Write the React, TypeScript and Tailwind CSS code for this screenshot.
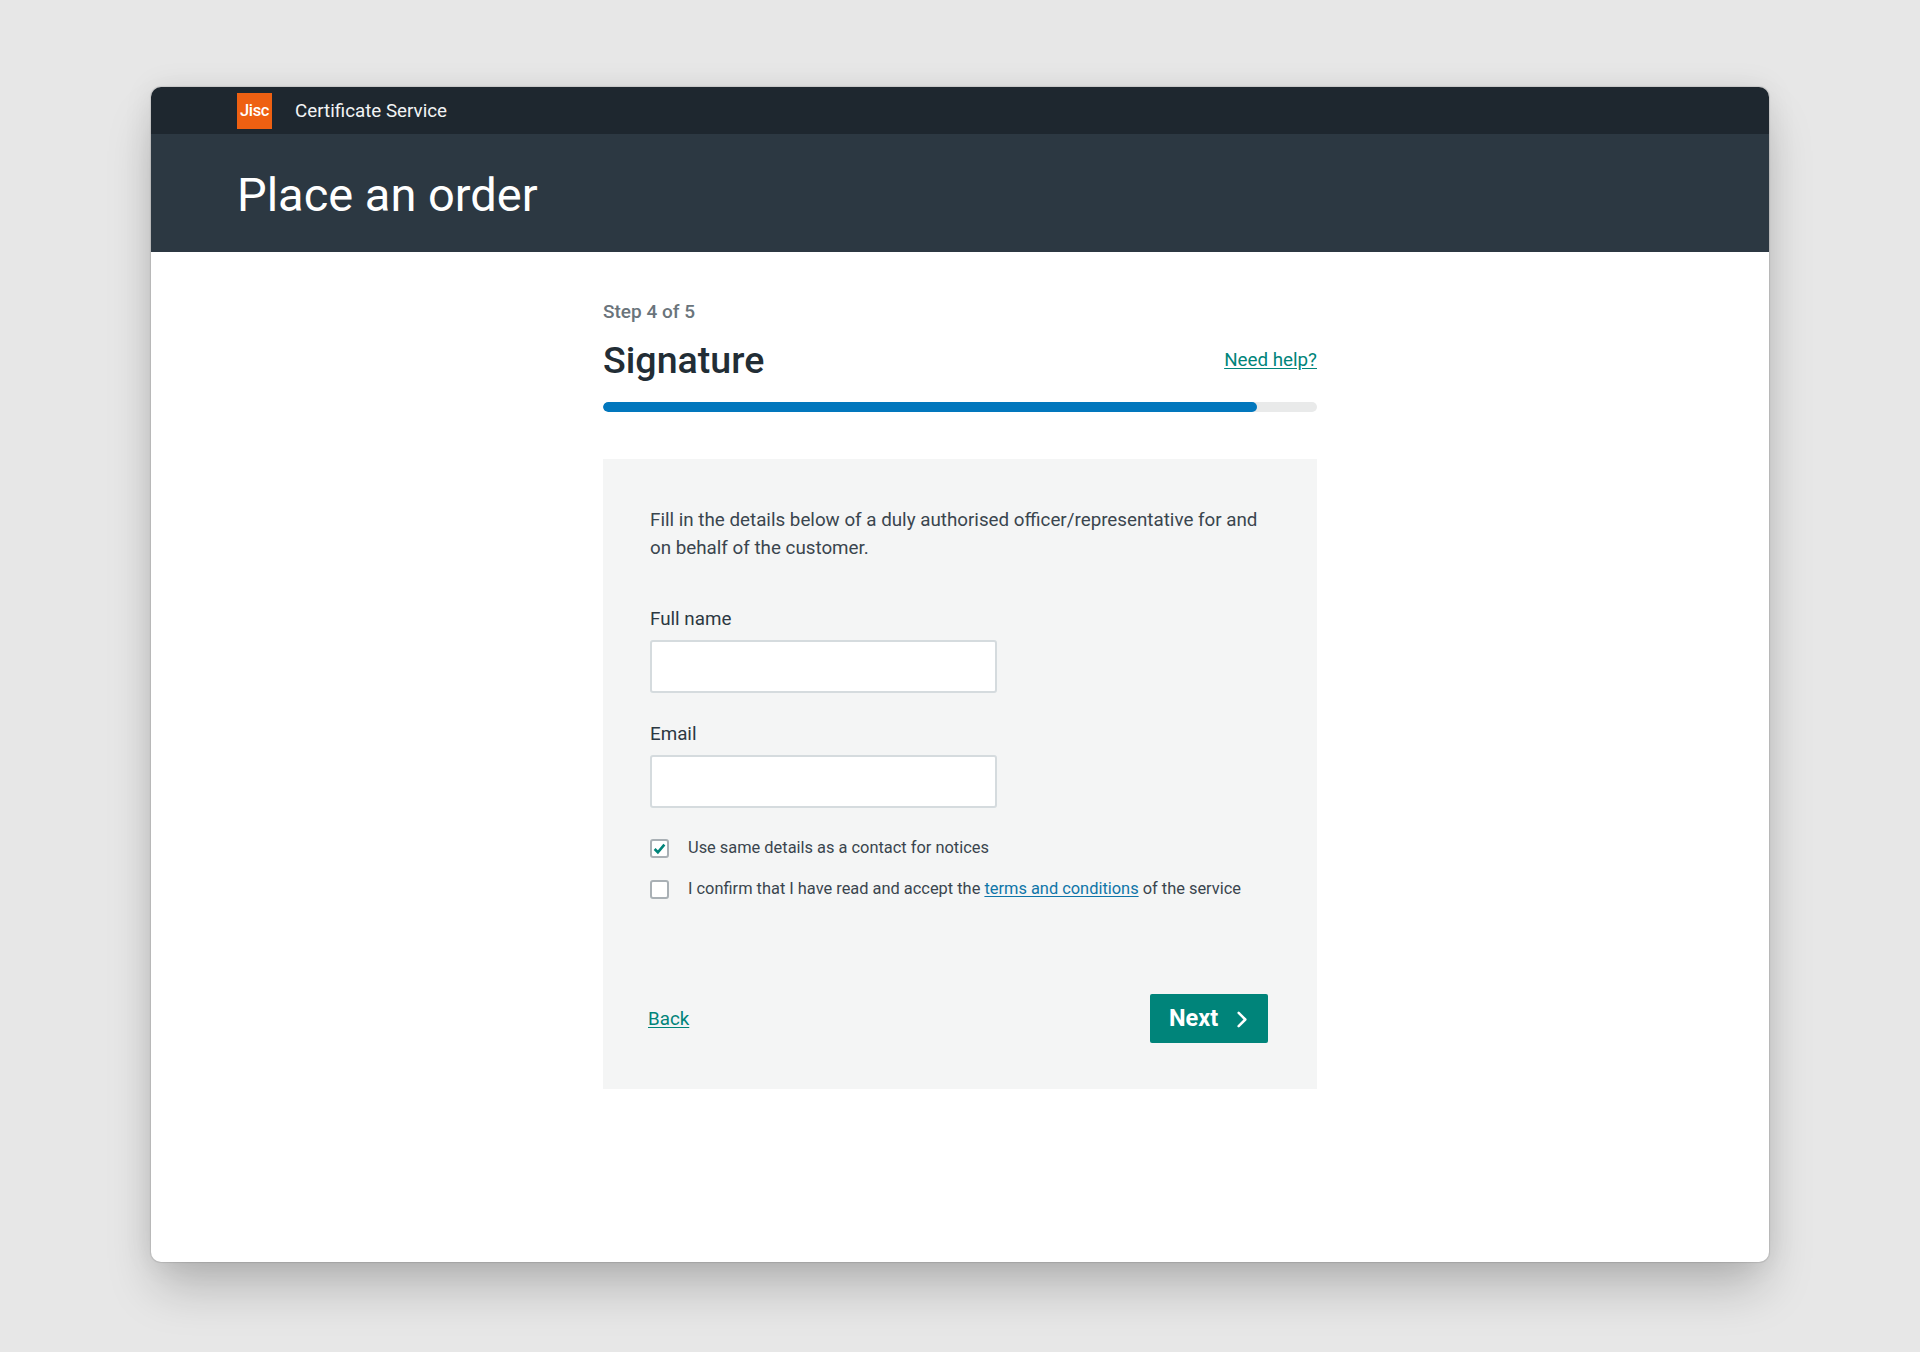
export default function App() {
  return (
    <div className="h-[1352px] w-full overflow-hidden bg-[#e7e7e7] pt-[87px] font-['Roboto',sans-serif]">
      <div className="mx-auto flex h-[1175px] w-[1618px] flex-col overflow-hidden rounded-[10px] bg-white shadow-[0_30px_50px_-6px_rgba(0,0,0,0.22),0_0_30px_rgba(0,0,0,0.08),0_0_1px_1px_rgba(0,0,0,0.1)]">
        <div className="flex h-[47px] items-center bg-[#1e272f] pl-[86px]">
          <div className="flex h-[36px] w-[35px] items-center justify-center bg-[#ee6012] pt-[1px] text-[16.5px] font-medium tracking-tight text-white">Jisc</div>
          <div className="ml-[23px] pt-[1px] text-[18.8px] text-[#f2f4f5]">Certificate Service</div>
        </div>
        <div className="flex h-[118px] items-center bg-[#2c3842] pl-[86px] pt-[3px]">
          <h1 className="text-[47px] leading-none text-white">Place an order</h1>
        </div>
        <main className="mx-auto flex w-[714px] flex-col pt-[48px]">
          <div className="text-[19px] leading-[24px] font-medium text-[#6a747b]">Step 4 of 5</div>
          <div className="mt-[13px] flex h-[48px] items-center justify-between">
            <h2 className="text-[37.6px] leading-none font-medium text-[#222d35]">Signature</h2>
            <a className="mb-[2px] text-[18.8px] text-[#00847a] underline underline-offset-2">Need help?</a>
          </div>
          <div className="mt-[17px] h-[10px] overflow-hidden rounded-full bg-[#e9eaea]">
            <div className="h-full w-[654px] rounded-full bg-[#0277bd]" />
          </div>
          <section className="mt-[47px] h-[630px] bg-[#f4f5f5] px-[47px] pt-[47px]">
            <p className="text-[18.8px] leading-[28px] text-[#3a454e]">
              Fill in the details below of a duly authorised officer/representative for and on behalf of the customer.
            </p>
            <label className="mt-[43px] block text-[18.8px] leading-[28px] text-[#2c3842]">Full name</label>
            <div className="mt-[7px] h-[53px] w-[347px] rounded-[3px] border-2 border-[#d5dbde] bg-white" />
            <label className="mt-[27px] block text-[18.8px] leading-[28px] text-[#2c3842]">Email</label>
            <div className="mt-[7px] h-[53px] w-[347px] rounded-[3px] border-2 border-[#d5dbde] bg-white" />
            <div className="mt-[28px] flex h-[24px] items-center">
              <span className="flex h-[19px] w-[19px] items-center justify-center rounded-[3px] border-2 border-[#a9b0b5] bg-white">
                <svg viewBox="0 0 12 12" className="h-[13px] w-[13px]" fill="none" stroke="#00847a" strokeWidth="2.4">
                  <path d="M1.5 6.5 4.5 9.5 10.5 2.5" />
                </svg>
              </span>
              <span className="ml-[19px] text-[16.4px] text-[#3a454e]">Use same details as a contact for notices</span>
            </div>
            <div className="mt-[17px] flex h-[24px] items-center">
              <span className="h-[19px] w-[19px] rounded-[3px] border-2 border-[#a9b0b5] bg-white" />
              <span className="ml-[19px] text-[16.4px] text-[#3a454e]">
                I confirm that I have read and accept the <a className="text-[#0f75a8] underline underline-offset-2">terms and conditions</a> of the service
              </span>
            </div>
            <div className="mt-[93px] flex h-[49px] items-center justify-between">
              <a className="-ml-[2px] pt-[2px] text-[18.8px] text-[#00847a] underline underline-offset-2">Back</a>
              <button className="mr-[2px] flex h-[49px] w-[118px] items-center justify-center gap-[19px] rounded-[2px] bg-[#00847a] pt-[1px] pr-[2px] text-[23.5px] font-bold text-white">
                Next
                <svg viewBox="0 0 12 20" className="h-[17px] w-[10px]" fill="none" stroke="white" strokeWidth="3" strokeLinecap="round" strokeLinejoin="round">
                  <path d="M2 2 10 10 2 18" />
                </svg>
              </button>
            </div>
          </section>
        </main>
      </div>
    </div>
  );
}
